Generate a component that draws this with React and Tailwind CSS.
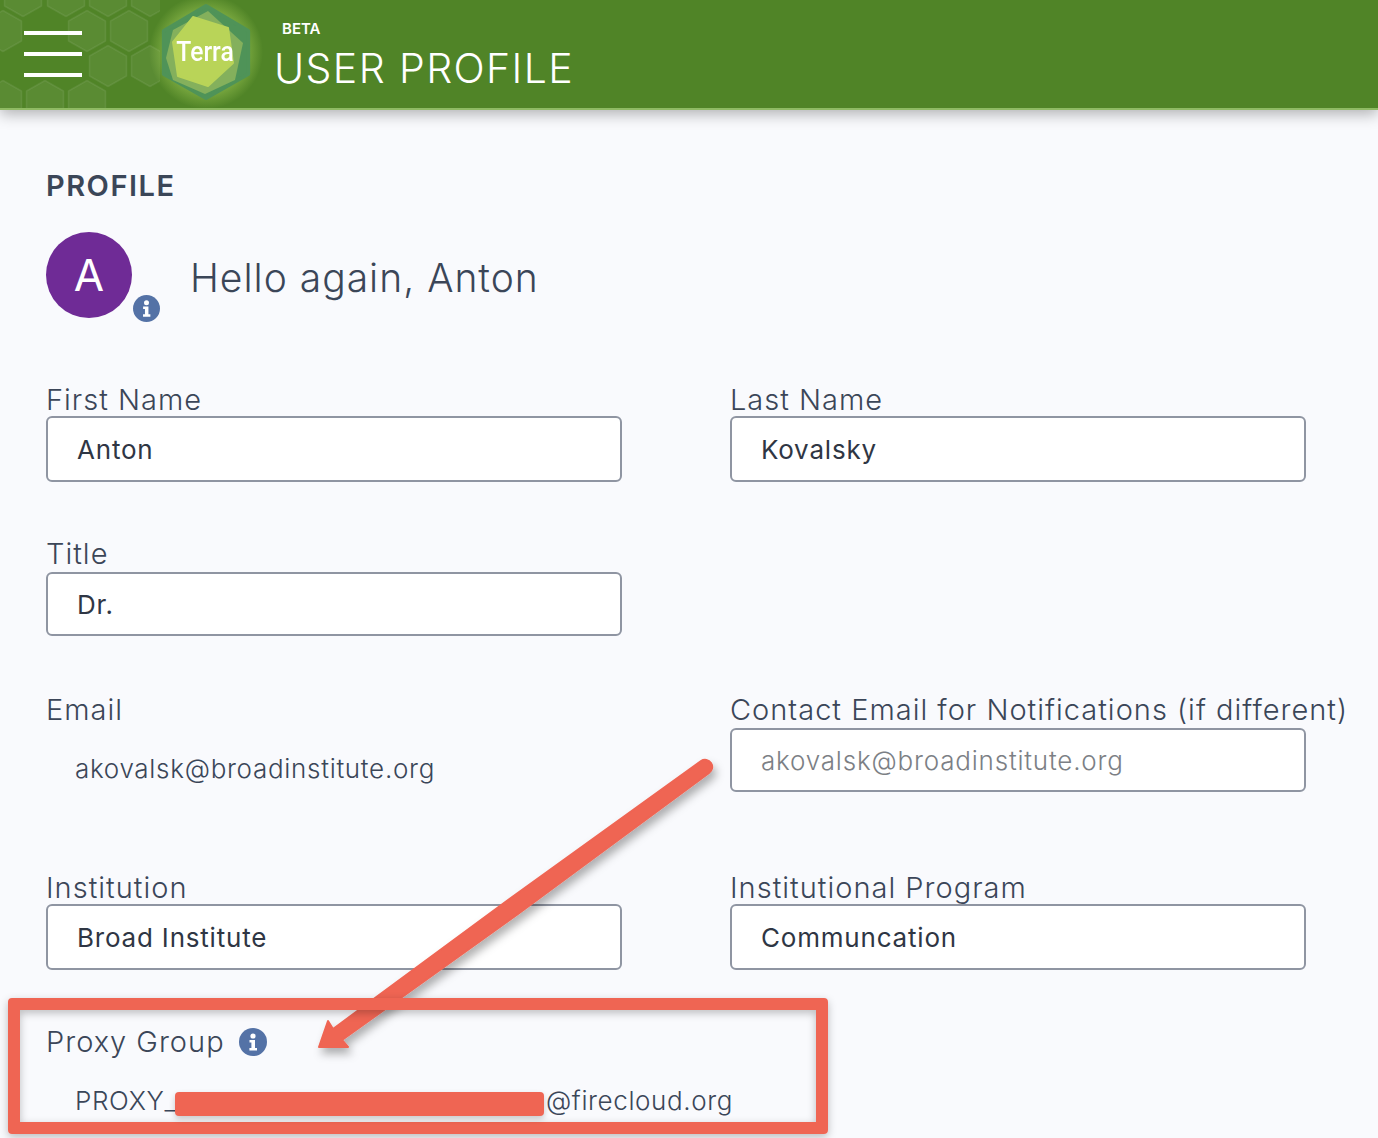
import React from 'react';

const hexPoints = '0,-20.5 18.5,-10 18.5,10 0,20.5 -18.5,10 -18.5,-10';
const hexes = [
  [23, -4], [66, -4], [108, -4], [150, -4],
  [3, 31], [87, 31], [129, 31],
  [108, 66], [150, 66],
  [3, 101], [45, 101], [87, 101],
];

const InfoBadge = ({ className }) => (
  <svg className={className} viewBox="0 0 28 28">
    <circle cx="14" cy="14" r="14" fill="#5472a6" />
    <circle cx="14" cy="8" r="2.6" fill="#fff" />
    <path d="M10.5 12h5.5v8h2v2.6h-7.6V20h2v-5.4h-1.900z" fill="#fff" />
  </svg>
);

const TerraLogo = () => (
  <div className="relative w-[100px] h-[110px] shrink-0">
    <svg className="w-full h-full overflow-visible" viewBox="0 0 100 110">
      <defs>
        <radialGradient id="glow" cx="50%" cy="50%" r="50%">
          <stop offset="60%" stopColor="#b5dc62" stopOpacity="0.55" />
          <stop offset="100%" stopColor="#b5dc62" stopOpacity="0" />
        </radialGradient>
      </defs>
      <circle cx="50" cy="52" r="57" fill="url(#glow)" />
      <path
        d="M50 4 L94 30 V75 L50 100 L6 75 V30 Z"
        fill="#4f9358"
        stroke="#4f9358"
        strokeWidth="4"
        strokeLinejoin="round"
        transform="translate(50 52) scale(0.96) translate(-50 -52)"
      />
      <polygon points="52,11 87,43 79,80 49,94 17,80 10,58 17,30" fill="#84b05c" />
      <polygon points="37,17 72,28 77,63 52,86 22,76 17,42" fill="#b9d458" stroke="#b9d458" strokeWidth="2" strokeLinejoin="round" />
    </svg>
    <span className="absolute left-[5px] top-[34px] w-[88px] text-center text-white text-[28px] leading-[36px] font-medium font-['Roboto',sans-serif] [transform:scaleX(0.88)]">
      Terra
    </span>
  </div>
);

const Header = () => (
  <header className="relative h-[110px] bg-[#508427] border-b-2 border-[#8fbb64] shadow-[0_4px_14px_rgba(0,0,0,0.3)] flex items-center">
    <svg className="absolute left-0 top-0 w-[160px] h-[108px]" viewBox="0 0 160 108">
      {hexes.map(([x, y]) => (
        <polygon
          key={`${x}-${y}`}
          points={hexPoints}
          transform={`translate(${x} ${y})`}
          fill="#ffffff"
          fillOpacity="0.06"
          stroke="#ffffff"
          strokeOpacity="0.08"
          strokeLinejoin="round"
          strokeWidth="1.500"
        />
      ))}
    </svg>
    <div className="relative ml-[24px] w-[58px] flex flex-col gap-[17px]">
      <div className="h-[4px] bg-white" />
      <div className="h-[4px] bg-white" />
      <div className="h-[4px] bg-white" />
    </div>
    <div className="relative ml-[74px] mt-[2px]">
      <TerraLogo />
    </div>
    <div className="relative ml-[18px] text-white mt-[2px]">
      <div className="ml-[8px] text-[15px] leading-[18px] font-semibold">BETA</div>
      <div className="text-[41px] leading-[46px] mt-[7px] font-light tracking-[1.4px]">USER PROFILE</div>
    </div>
  </header>
);

const Label = ({ children }) => (
  <div className="text-[29px] leading-[32px] font-light text-[#3b4658] tracking-[1px]">{children}</div>
);

const Field = ({ label, value, height = 'h-[66px]', gap, muted }) => (
  <div>
    <Label>{label}</Label>
    <div
      className={`${height} ${gap ? 'mt-[2px]' : ''} w-[576px] bg-white border-2 border-[#8f95a2] rounded-[6px] flex items-center pl-[29px] text-[26px] tracking-[0.8px] ${
        muted ? 'text-[#7c7f85] font-light' : 'text-[#2f3644] font-normal'
      }`}
    >
      {value}
    </div>
  </div>
);

const Annotation = () => (
  <div className="absolute left-0 top-0 w-[1378px] h-[1138px] pointer-events-none overflow-hidden">
    <svg className="absolute inset-0 w-full h-full" viewBox="0 0 1378 1138">
      <defs>
        <filter id="shade" x="-10%" y="-10%" width="125%" height="125%">
          <feDropShadow dx="3" dy="6" stdDeviation="4" floodColor="#000" floodOpacity="0.3" />
        </filter>
      </defs>
      <path
        d="M701 761 L508 900 L333 1029 L328 1021 L319 1047 L348 1047 L342 1040 L518 914 L709 773 A7 7 0 0 0 701 761 Z"
        fill="#ef6553"
        stroke="#ef6553"
        strokeWidth="2"
        strokeLinejoin="round"
        filter="url(#shade)"
      />
    </svg>
    <div className="absolute left-[8px] top-[998px] w-[820px] h-[136px] border-[12px] border-[#ef6553] rounded-[4px] shadow-[0_3px_8px_rgba(0,0,0,0.25),inset_0_3px_8px_rgba(0,0,0,0.25)]" />
    <div className="absolute left-[175px] top-[1092px] w-[369px] h-[24px] bg-[#ef6553] rounded-[4px] shadow-[0_3px_6px_rgba(0,0,0,0.2)]" />
  </div>
);

export default function App() {
  return (
    <div className="relative w-[1378px] h-[1138px] overflow-hidden bg-[#f9fafd] font-['Inter',sans-serif]">
      <Header />
      <main className="pl-[46px]">
        <h2 className="mt-[58px] text-[29px] leading-[36px] font-semibold text-[#3b4658] tracking-[1.5px]">PROFILE</h2>
        <div className="mt-[28px] flex items-center">
          <div className="relative w-[86px] h-[86px] rounded-full bg-[#6f2b96] flex items-center justify-center text-white text-[44px] font-normal">
            A
            <InfoBadge className="absolute left-[87px] top-[63px] w-[27px] h-[27px]" />
          </div>
          <div className="ml-[58px] pt-[6px] text-[39px] leading-[46px] font-light text-[#3b4658] tracking-[1px]">Hello again, Anton</div>
        </div>

        <div className="mt-[66px] grid grid-cols-[684px_1fr]">
          <Field label="First Name" value="Anton" />
          <Field label="Last Name" value="Kovalsky" />
        </div>

        <div className="mt-[56px]">
          <Field label="Title" value="Dr." height="h-[64px]" gap />
        </div>

        <div className="mt-[58px] grid grid-cols-[684px_1fr]">
          <div>
            <Label>Email</Label>
            <div className="mt-[27px] pl-[29px] text-[26px] leading-[32px] font-light text-[#3b4658] tracking-[0.7px]">akovalsk@broadinstitute.org</div>
          </div>
          <Field label="Contact Email for Notifications (if different)" value="akovalsk@broadinstitute.org" height="h-[64px]" gap muted />
        </div>

        <div className="mt-[80px] grid grid-cols-[684px_1fr]">
          <Field label="Institution" value="Broad Institute" />
          <Field label="Institutional Program" value="Communcation" />
        </div>

        <div className="mt-[56px] flex items-center gap-[14px]">
          <Label>Proxy Group</Label>
          <InfoBadge className="w-[28px] h-[28px]" />
        </div>
        <div className="mt-[27px] pl-[29px] text-[26px] leading-[32px] font-light text-[#3b4658] tracking-[0.6px] flex">
          <span className="w-[100px]">PROXY_</span>
          <span className="ml-[371px]">@firecloud.org</span>
        </div>
      </main>
      <Annotation />
    </div>
  );
}
